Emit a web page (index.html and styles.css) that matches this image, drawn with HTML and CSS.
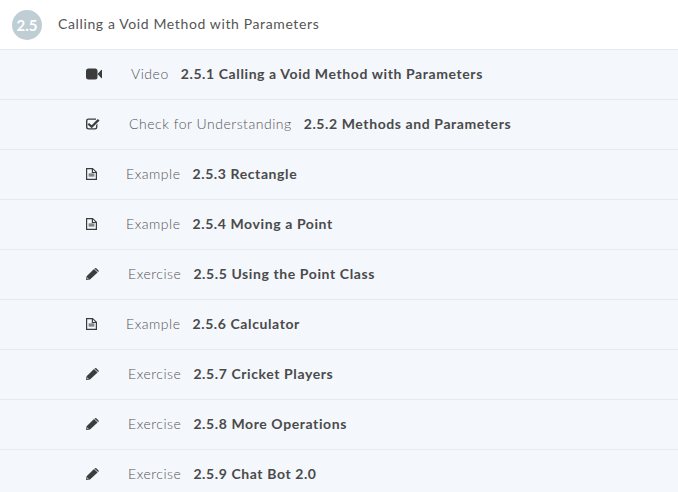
FILE: index.html
```html
<!DOCTYPE html>
<html lang="en">
<head>
    <title>Calling a Void Method with Parameters</title>
    <meta charset="utf-8" />
    <link rel="stylesheet" href="styles.css">
</head>
<body>
<svg class="defs" width="0" height="0">
    <symbol id="i-video" viewBox="0 0 16 12">
        <rect x="0" y="0.5" width="11.5" height="11" rx="2.5"/>
        <path d="M11.5 6 L15.2 2 Q16 1.2 16 2.5 V9.5 Q16 10.8 15.2 10 Z"/>
    </symbol>
    <symbol id="i-check" viewBox="0 0 14 12">
        <path d="M2.5 .5 H10 V1.8 H2.5 Q1.4 1.8 1.4 2.9 V9.1 Q1.4 10.2 2.5 10.2 H9 Q10.1 10.2 10.1 9.1 V7 L11.4 5.7 V9.2 Q11.4 11.5 9 11.5 H2.5 Q0 11.5 0 9.2 V2.8 Q0 .5 2.5 .5 Z"/>
        <path d="M3 5 L5.7 7.3 L11.8 1 L13.6 2.6 L5.7 10.2 L1.6 6.5 Z"/>
    </symbol>
    <symbol id="i-doc" viewBox="0 0 11 12">
        <path fill-rule="evenodd" d="M0 0 H6.8 L11 4 V12 H0 Z M1.2 1.2 V10.8 H9.8 V5 H5.8 V1.2 Z M7 1.6 V3.9 H9.4 Z"/>
        <rect x="2.6" y="5.6" width="5.8" height="1"/>
        <rect x="2.6" y="7.4" width="5.8" height="1"/>
    </symbol>
    <symbol id="i-pencil" viewBox="0 0 13 12">
        <path fill-rule="evenodd" d="M0 12 L.6 8.2 L8 1 L11.6 4.4 L4 11.4 Z M1.2 10.9 L2.7 10.6 L1.5 9.4 Z"/>
        <path d="M8.9 .3 Q9.6 -.2 10.3 .3 L12.5 2.4 Q13.1 3.1 12.4 3.8 L12.1 4 L8.6 .7 Z"/>
    </symbol>
</svg>

<div class="section-header">
    <span class="section-num">2.5</span>
    <span class="section-title">Calling a Void Method with Parameters</span>
</div>

<ul class="items">
    <li class="item">
        <svg class="icon w16"><use href="#i-video"/></svg>
        <span class="kind">Video</span>
        <span class="name">2.5.1 Calling a Void Method with Parameters</span>
    </li>
    <li class="item">
        <svg class="icon w14"><use href="#i-check"/></svg>
        <span class="kind">Check for Understanding</span>
        <span class="name">2.5.2 Methods and Parameters</span>
    </li>
    <li class="item">
        <svg class="icon w11"><use href="#i-doc"/></svg>
        <span class="kind">Example</span>
        <span class="name">2.5.3 Rectangle</span>
    </li>
    <li class="item">
        <svg class="icon w11"><use href="#i-doc"/></svg>
        <span class="kind">Example</span>
        <span class="name">2.5.4 Moving a Point</span>
    </li>
    <li class="item">
        <svg class="icon w13"><use href="#i-pencil"/></svg>
        <span class="kind">Exercise</span>
        <span class="name">2.5.5 Using the Point Class</span>
    </li>
    <li class="item">
        <svg class="icon w11"><use href="#i-doc"/></svg>
        <span class="kind">Example</span>
        <span class="name">2.5.6 Calculator</span>
    </li>
    <li class="item">
        <svg class="icon w13"><use href="#i-pencil"/></svg>
        <span class="kind">Exercise</span>
        <span class="name">2.5.7 Cricket Players</span>
    </li>
    <li class="item">
        <svg class="icon w13"><use href="#i-pencil"/></svg>
        <span class="kind">Exercise</span>
        <span class="name">2.5.8 More Operations</span>
    </li>
    <li class="item">
        <svg class="icon w13"><use href="#i-pencil"/></svg>
        <span class="kind">Exercise</span>
        <span class="name">2.5.9 Chat Bot 2.0</span>
    </li>
</ul>
</body>
</html>
```
FILE: styles.css
```css
html, body {
    height: 100%;
}
body {
    overflow: hidden;
    margin: 0;
    font-family: "Lato", "Liberation Sans", sans-serif;
    background: #fff;
    color: #4a4a4a;
}
.defs {
    position: absolute;
}

.section-header {
    display: flex;
    align-items: center;
    height: 49px;
    padding-left: 12px;
    border-bottom: 1px solid #e6e9ee;
}
.section-num {
    display: flex;
    align-items: center;
    justify-content: center;
    width: 30px;
    height: 30px;
    border-radius: 50%;
    background: #bfcdd5;
    color: #fff;
    font-size: 15px;
    font-weight: 700;
}
.section-title {
    margin-left: 16px;
    margin-bottom: 2px;
    font-size: 14px;
    letter-spacing: 0.62px;
    color: #555;
}

.items {
    margin: 0;
    padding: 0;
    list-style: none;
}
.item {
    display: flex;
    align-items: center;
    height: 47px;
    padding-left: 86px;
    padding-bottom: 2px;
    background: #f4f7fc;
    border-bottom: 1px solid #e6e9ee;
    font-size: 14px;
}
.icon {
    flex: none;
    height: 12px;
    margin-right: 29px;
    fill: #3c3c3c;
}
.w16 { width: 16px; }
.w14 { width: 14px; }
.w13 { width: 13px; }
.w11 { width: 11px; }

.kind {
    margin-right: 12px;
    letter-spacing: 0.52px;
    font-weight: 300;
    color: #555;
}
.name {
    font-weight: 700;
    letter-spacing: 0.6px;
    color: #4a4a4a;
}
```
